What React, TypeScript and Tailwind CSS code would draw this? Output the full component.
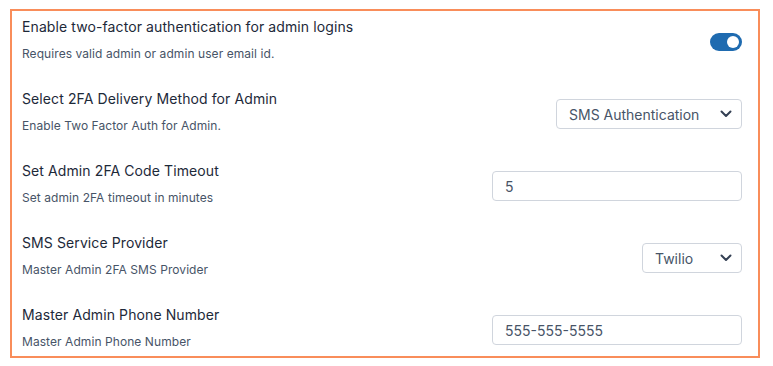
import React from "react";

function Chevron() {
  return (
    <svg width="12" height="8" viewBox="0 0 12 8" fill="none">
      <path d="M1.5 1.5 L6 6 L10.5 1.5" stroke="#344054" strokeWidth="2" strokeLinecap="round" strokeLinejoin="round" />
    </svg>
  );
}

function Row({ title, sub, children }: { title: string; sub: string; children: React.ReactNode }) {
  return (
    <div className="flex items-center justify-between">
      <div className="flex flex-col">
        <div className="text-[14px] leading-[20px] tracking-[0.1px] text-[#1d2939]">{title}</div>
        <div className="mt-[9px] text-[12px] leading-[16px] tracking-[0.07px] text-[#475467]">{sub}</div>
      </div>
      <div className="pt-[5px]">{children}</div>
    </div>
  );
}

function Select({ value, width }: { value: string; width: string }) {
  return (
    <div className={`flex h-[30px] items-center justify-between rounded-[4px] border border-[#d0d5dd] bg-white pl-[12px] pr-[9px] text-[14px] text-[#475467] ${width}`}>
      <span>{value}</span>
      <Chevron />
    </div>
  );
}

function Input({ value }: { value: string }) {
  return (
    <div className="flex h-[30px] w-[250px] items-center rounded-[4px] border border-[#d0d5dd] bg-white pl-[12px] text-[14px] text-[#475467]">
      {value}
    </div>
  );
}

export default function App() {
  return (
    <div className="h-[366px] w-[773px] bg-white pl-[10px] pt-[9px]" style={{ fontFamily: "Inter, 'Noto Sans', sans-serif" }}>
      <div className="flex h-[349px] w-[750px] flex-col gap-[27px] border-2 border-[#f98d5a] pl-[10px] pr-[16px] pt-[6px]">
        <Row title="Enable two-factor authentication for admin logins" sub="Requires valid admin or admin user email id.">
          <div className="flex h-[18px] w-[32px] items-center justify-end rounded-full bg-[#1f6bb0] pr-[3px]">
            <div className="h-[12px] w-[12px] rounded-full bg-white" />
          </div>
        </Row>
        <Row title="Select 2FA Delivery Method for Admin" sub="Enable Two Factor Auth for Admin.">
          <Select value="SMS Authentication" width="w-[186px]" />
        </Row>
        <Row title="Set Admin 2FA Code Timeout" sub="Set admin 2FA timeout in minutes">
          <Input value="5" />
        </Row>
        <Row title="SMS Service Provider" sub="Master Admin 2FA SMS Provider">
          <Select value="Twilio" width="w-[100px]" />
        </Row>
        <Row title="Master Admin Phone Number" sub="Master Admin Phone Number">
          <Input value="555-555-5555" />
        </Row>
      </div>
    </div>
  );
}
